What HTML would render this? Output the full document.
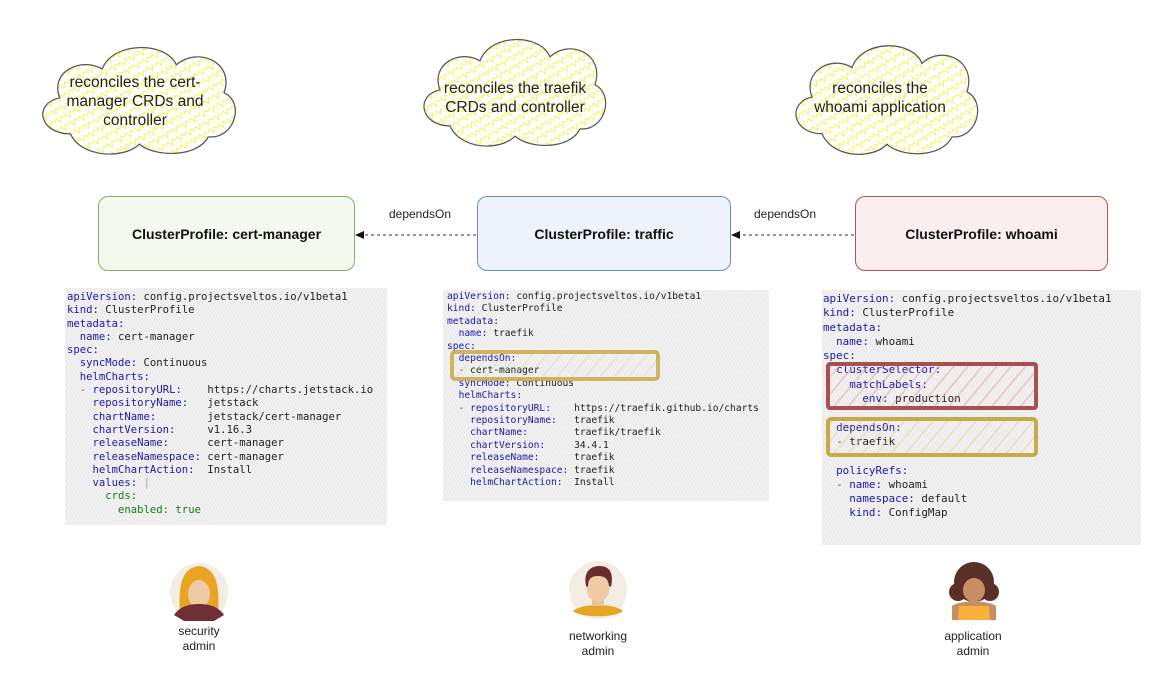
<!DOCTYPE html>
<html><head><meta charset="utf-8"><style>
body{margin:0;width:1162px;height:677px;background:#fff;position:relative;overflow:hidden;font-family:"Liberation Sans",sans-serif}
.a{position:absolute}
.code{position:absolute;background:#ebebeb;background-image:repeating-linear-gradient(60deg,rgba(255,255,255,.5) 0 1px,transparent 1px 3px);font-family:"DejaVu Sans Mono","Liberation Mono",monospace;color:#222;white-space:pre}
.k{color:#1a1aa6}.d{color:#c0208a}.g{color:#1a7a1a}
.box{position:absolute;height:73px;border-radius:10px;display:flex;align-items:center;justify-content:center;font-weight:bold;font-size:14px;color:#111}
.cl{position:absolute;text-align:center;font-size:15.5px;color:#222;line-height:19px}
.lbl{position:absolute;font-size:12px;color:#222;text-align:center;line-height:15px}
</style></head><body>
<svg class="a" style="left:0;top:0" width="1162" height="677">
<defs>
<pattern id="zz" width="10" height="9" patternUnits="userSpaceOnUse" patternTransform="rotate(-30)">
<polyline points="0,4.5 2.5,2 5,7 7.5,2 10,4.5" fill="none" stroke="#f6f250" stroke-width="0.9"/>
</pattern>
<path id="cloud" d="M40,95 C10,95 5,65 30,60 C20,35 50,20 70,32 C80,5 130,5 140,28 C160,10 195,25 185,55 C205,65 195,100 170,98 C160,118 120,118 105,105 C90,120 50,118 40,95 Z"/>
</defs>
<g transform="translate(28,36) scale(1.06,1.03)"><use href="#cloud" fill="#fff"/><use href="#cloud" fill="url(#zz)" stroke="#555" stroke-width="1.2"/></g>
<g transform="translate(410,28) scale(1.0,1.03)"><use href="#cloud" fill="#fff"/><use href="#cloud" fill="url(#zz)" stroke="#555" stroke-width="1.2"/></g>
<g transform="translate(782,34) scale(1.0,1.05)"><use href="#cloud" fill="#fff"/><use href="#cloud" fill="url(#zz)" stroke="#555" stroke-width="1.2"/></g>
<line x1="476" y1="235" x2="362" y2="235" stroke="#333" stroke-dasharray="3,3"/>
<polygon points="355,235 364,231 364,239" fill="#111"/>
<line x1="854" y1="235" x2="738" y2="235" stroke="#333" stroke-dasharray="3,3"/>
<polygon points="731,235 740,231 740,239" fill="#111"/>
<!-- security -->
<circle cx="199" cy="592" r="29" fill="#f3ede3"/>
<path d="M180,612 C178,585 182,568 199,566 C216,568 220,585 218,612Z" fill="#e8a423"/>
<ellipse cx="199" cy="594" rx="11" ry="14" fill="#efcba5"/>
<path d="M174,615 C180,606 190,604 199,604 C208,604 218,606 224,615 L214,621 L184,621Z" fill="#6e2f36"/>
<!-- networking -->
<circle cx="598" cy="590" r="29" fill="#f3ede3"/>
<path d="M573,611 C582,603 614,603 623,611 C616,618 580,618 573,611Z" fill="#e8a423"/>
<rect x="592" y="598" width="12" height="8" fill="#e9c29b"/>
<ellipse cx="598" cy="588" rx="11.5" ry="14" fill="#efcba5"/>
<path d="M586,586 C583,570 592,566 600,566 C610,566 614,574 611,587 L609,586 C608,578 604,576 598,576 C592,576 588,578 588,587Z" fill="#6a2d2f"/>
<!-- application -->
<circle cx="974" cy="582" r="20" fill="#5a2f27"/>
<circle cx="958" cy="592" r="9" fill="#5a2f27"/><circle cx="990" cy="592" r="9" fill="#5a2f27"/>
<ellipse cx="974" cy="590" rx="11" ry="12" fill="#c98d63"/>
<path d="M952,620 L952,606 C960,600 988,600 996,606 L996,620Z" fill="#c98d63"/>
<path d="M958,620 L959,606 L989,606 L990,620Z" fill="#fbb03b"/>
</svg>
<div class="cl" style="left:50px;top:73px;width:170px">reconciles the cert-<br>manager CRDs and<br>controller</div>
<div class="cl" style="left:420px;top:79px;width:190px">reconciles the traefik<br>CRDs and controller</div>
<div class="cl" style="left:790px;top:79px;width:180px">reconciles the<br>whoami application</div>
<div class="box" style="left:98px;top:196px;width:255px;border:1.5px solid #82b366;background:#f4f9ef">ClusterProfile: cert-manager</div>
<div class="box" style="left:477px;top:196px;width:252px;border:1.5px solid #6c8ebf;background:#eef3fb">ClusterProfile: traffic</div>
<div class="box" style="left:855px;top:196px;width:251px;border:1.5px solid #b85450;background:#fbeeee">ClusterProfile: whoami</div>
<div class="lbl" style="left:380px;top:207px;width:80px">dependsOn</div>
<div class="lbl" style="left:745px;top:207px;width:80px">dependsOn</div>
<div class="code" style="left:65px;top:288px;width:320px;height:234px;font-size:10.6px;line-height:13.3px;padding-left:2px;padding-top:3px"><span class="k">apiVersion:</span> config.projectsveltos.io/v1beta1
<span class="k">kind:</span> ClusterProfile
<span class="k">metadata:</span>
  <span class="k">name:</span> cert-manager
<span class="k">spec:</span>
  <span class="k">syncMode:</span> Continuous
  <span class="k">helmCharts:</span>
  <span class="d">-</span> <span class="k">repositoryURL:</span>    https://charts.jetstack.io
    <span class="k">repositoryName:</span>   jetstack
    <span class="k">chartName:</span>        jetstack/cert-manager
    <span class="k">chartVersion:</span>     v1.16.3
    <span class="k">releaseName:</span>      cert-manager
    <span class="k">releaseNamespace:</span> cert-manager
    <span class="k">helmChartAction:</span>  Install
    <span class="k">values:</span> <span style="color:#aaa">|</span>
      <span class="g">crds:</span>
        <span class="g">enabled: true</span></div>
<div class="code" style="left:443px;top:290px;width:322px;height:210px;font-size:9.6px;line-height:12.4px;padding-left:4px;padding-top:1px"><span class="k">apiVersion:</span> config.projectsveltos.io/v1beta1
<span class="k">kind:</span> ClusterProfile
<span class="k">metadata:</span>
  <span class="k">name:</span> traefik
<span class="k">spec:</span>
  <span class="k">dependsOn:</span>
  <span class="d">-</span> cert-manager
  <span class="k">syncMode:</span> Continuous
  <span class="k">helmCharts:</span>
  <span class="d">-</span> <span class="k">repositoryURL:</span>    https://traefik.github.io/charts
    <span class="k">repositoryName:</span>   traefik
    <span class="k">chartName:</span>        traefik/traefik
    <span class="k">chartVersion:</span>     34.4.1
    <span class="k">releaseName:</span>      traefik
    <span class="k">releaseNamespace:</span> traefik
    <span class="k">helmChartAction:</span>  Install</div>
<div class="a" style="left:450px;top:350px;width:210px;height:31px;border:4px solid #c9a94a;border-radius:5px;box-sizing:border-box;opacity:.85;background:repeating-linear-gradient(-50deg,transparent 0 9px,rgba(230,200,120,.3) 9px 11px)"></div>
<div class="code" style="left:822px;top:290px;width:318px;height:253px;font-size:10.9px;line-height:14.3px;padding-left:1px;padding-top:2px"><span class="k">apiVersion:</span> config.projectsveltos.io/v1beta1
<span class="k">kind:</span> ClusterProfile
<span class="k">metadata:</span>
  <span class="k">name:</span> whoami
<span class="k">spec:</span>
  <span class="k">clusterSelector:</span>
    <span class="k">matchLabels:</span>
      <span class="k">env:</span> production
  
  <span class="k">dependsOn:</span>
  <span class="d">-</span> traefik

  <span class="k">policyRefs:</span>
  <span class="d">-</span> <span class="k">name:</span> whoami
    <span class="k">namespace:</span> default
    <span class="k">kind:</span> ConfigMap</div>
<div class="a" style="left:826px;top:362px;width:212px;height:48px;border:4px solid #a84f4f;border-radius:4px;box-sizing:border-box;background:repeating-linear-gradient(-50deg,transparent 0 9px,rgba(230,140,140,.35) 9px 11px)"></div>
<div class="a" style="left:826px;top:417px;width:212px;height:40px;border:4px solid #c9a94a;border-radius:5px;box-sizing:border-box;background:repeating-linear-gradient(-50deg,transparent 0 9px,rgba(230,200,120,.35) 9px 11px)"></div>
<div class="lbl" style="left:159px;top:624px;width:80px">security<br>admin</div>
<div class="lbl" style="left:558px;top:629px;width:80px">networking<br>admin</div>
<div class="lbl" style="left:928px;top:629px;width:90px">application<br>admin</div>
</body></html>
